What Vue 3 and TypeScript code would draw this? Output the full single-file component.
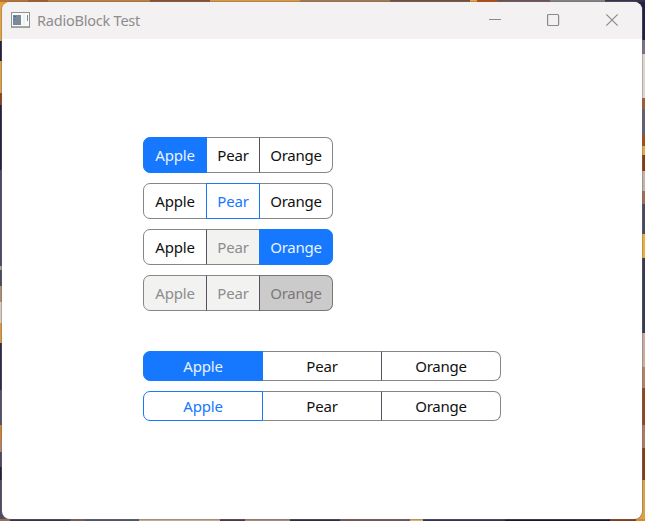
<script setup lang="ts">
interface Option {
  label: string
  disabled?: boolean
}

interface Block {
  variant: 'solid' | 'outline'
  selected: number
  options: Option[]
}

const fruits = (disabled: number[] = []): Option[] =>
  ['Apple', 'Pear', 'Orange'].map((label, i) => ({ label, disabled: disabled.includes(i) }))

const groups: { name: string; blocks: Block[] }[] = [
  {
    name: 'compact',
    blocks: [
      { variant: 'solid', selected: 0, options: fruits() },
      { variant: 'outline', selected: 1, options: fruits() },
      { variant: 'solid', selected: 2, options: fruits([1]) },
      { variant: 'solid', selected: 2, options: fruits([0, 1, 2]) },
    ],
  },
  {
    name: 'wide',
    blocks: [
      { variant: 'solid', selected: 0, options: fruits() },
      { variant: 'outline', selected: 0, options: fruits() },
    ],
  },
]
</script>

<template>
  <div class="desktop">
    <div class="window">
      <header class="titlebar">
        <svg class="app-icon" width="19" height="16" viewBox="0 0 19 16">
          <rect x="0.5" y="0.5" width="18" height="14.5" fill="#f7f9fa" stroke="#92918f" />
          <path d="M0 15.2H19" stroke="#92918f" stroke-width="1.3" />
          <rect x="2" y="3" width="8" height="10" fill="#7b8a99" />
          <path d="M3 4.5h2M3 7.5h1" stroke="#3268c5" />
          <path d="M13 2v11" stroke="#e6e9ea" />
          <path d="M16.5 3v6" stroke="#7b8791" />
        </svg>
        <h1 class="title">RadioBlock Test</h1>
        <div class="controls">
          <svg width="13" height="13" viewBox="0 0 13 13"><path d="M1 6.5h12" /></svg>
          <svg width="13" height="13" viewBox="0 0 13 13"><rect x="0.6" y="1.5" width="11" height="11" rx="1" /></svg>
          <svg width="13" height="13" viewBox="0 0 13 13"><path d="M0.3 1.3l11.4 11.4M11.7 1.3L0.3 12.7" /></svg>
        </div>
      </header>
      <main class="content">
        <section v-for="group in groups" :key="group.name" class="group" :class="group.name">
          <div v-for="(block, b) in group.blocks" :key="b" class="block" :class="block.variant">
            <div
              v-for="(option, i) in block.options"
              :key="option.label"
              class="option"
              :class="{ selected: i === block.selected, disabled: option.disabled }"
            >
              {{ option.label }}
            </div>
          </div>
        </section>
      </main>
    </div>
  </div>
</template>

<style>
body {
  margin: 0;
  overflow: hidden;
}
</style>

<style scoped>
.desktop {
  box-sizing: border-box;
  width: 645px;
  height: 521px;
  padding: 2px 3px 2px 2px;
  background:
    linear-gradient(90deg, #b87330 0 28px, #a55b27 28px 48px, #bd8039 48px 150px, #8b5030 150px 210px, #d99a3f 210px 300px, #a5794e 300px 390px, #76503f 390px 470px, #e9a43d 470px 477px, #b54c0c 477px 497px, #6c5355 497px 550px, #858083 550px 605px, #39304c 605px 645px) 0 0 / 645px 2px no-repeat,
    linear-gradient(90deg, #9d6c55 0 10px, #39304c 10px 70px, #765a5a 70px 85px, #51536d 85px 139px, #c6a98b 139px 220px, #4c3944 220px 245px, #a78778 245px 290px, #302b46 290px 340px, #765456 340px 410px, #dfb163 410px 423px, #343350 423px 505px, #1f162d 505px 610px, #843b18 610px 636px, #d18b35 636px 645px) 0 519px / 645px 2px no-repeat,
    linear-gradient(#e5a340 0 41px, #24203e 41px 61px, #dda044 61px 93px, #8e4215 93px 105px, #25203f 105px 170px, #4a4968 170px 266px, #b3a198 266px 270px, #4c4862 270px 286px, #b58a77 286px 302px, #d5ccc2 302px 323px, #dc9a3d 323px 343px, #302849 343px 390px, #53516a 390px 425px, #c9842f 425px 440px, #b98164 440px 452px, #494965 452px 467px, #26203a 467px 480px, #4d4c67 480px 521px) 0 0 / 10px 521px no-repeat,
    linear-gradient(#222044 0 40px, #77728b 40px 54px, #ded6cb 54px 98px, #a65c38 98px 109px, #606077 109px 134px, #a94b16 134px 146px, #e8a844 146px 155px, #8c3a10 155px 171px, #c5b3a9 171px 191px, #a66c59 191px 204px, #494967 204px 234px, #f1ad3b 234px 258px, #373957 258px 333px, #c9ac9b 333px 367px, #b48368 367px 388px, #93451b 388px 425px, #b07b61 425px 448px, #8b3c15 448px 480px, #dda044 480px 521px) 635px 0 / 10px 521px no-repeat,
    #6b5360;
  font-family: "Noto Sans", "Open Sans", sans-serif;
}

.window {
  display: flex;
  flex-direction: column;
  height: 517px;
  overflow: hidden;
  border-radius: 8px;
  background: #fff;
  box-shadow: 0 0 0 1px rgba(110, 105, 110, 0.4);
}

.titlebar {
  display: flex;
  flex: none;
  align-items: center;
  box-sizing: border-box;
  height: 37px;
  padding: 0 23px 0 9px;
  background: #f4f1f2;
}

.app-icon {
  flex: none;
  margin-top: -1px;
}

.title {
  margin: -2px 0 0 7px;
  color: #8e8c8c;
  font-size: 14.5px;
  font-weight: 400;
  letter-spacing: -0.22px;
  line-height: 20px;
  white-space: nowrap;
}

.controls {
  display: flex;
  gap: 46px;
  margin-top: -3px;
  margin-left: auto;
  fill: none;
  stroke: #8b8b88;
  stroke-width: 1.2;
}

.controls svg {
  overflow: visible;
}

.content {
  display: flex;
  flex-direction: column;
  gap: 40px;
  padding: 98px 0 0 141px;
}

.group {
  display: flex;
  flex-direction: column;
  gap: 10px;
}

.block {
  display: flex;
  height: 36px;
}

.wide .block {
  height: 30px;
}

.option {
  box-sizing: border-box;
  display: flex;
  flex: none;
  align-items: center;
  justify-content: center;
  width: 120px;
  border: 1px solid #868686;
  border-left-color: #55515f;
  background: #fff;
  color: #111;
  font-size: 15px;
  letter-spacing: -0.22px;
  line-height: 20px;
}

.option + .option {
  margin-left: -1px;
}

.option:first-child {
  border-left-color: #868686;
  border-radius: 7px 0 0 7px;
}

.option:last-child {
  border-radius: 0 7px 7px 0;
}

.compact .option:nth-child(1) {
  width: 64px;
}

.compact .option:nth-child(2) {
  width: 54px;
}

.compact .option:nth-child(3) {
  width: 74px;
}

.option.disabled {
  background: #f2f2f0;
  color: #8e8c8e;
}

.option.selected {
  z-index: 1;
}

.solid .option.selected {
  border-color: #1677ff;
  background: #1677ff;
  color: #e8f3ff;
}

.outline .option.selected {
  border-color: #1677ff;
  color: #1677ff;
}

.solid .option.selected.disabled {
  border-color: #777 #777 #777 #55515f;
  background: #cbcbcb;
  color: #7d7779;
}
</style>
